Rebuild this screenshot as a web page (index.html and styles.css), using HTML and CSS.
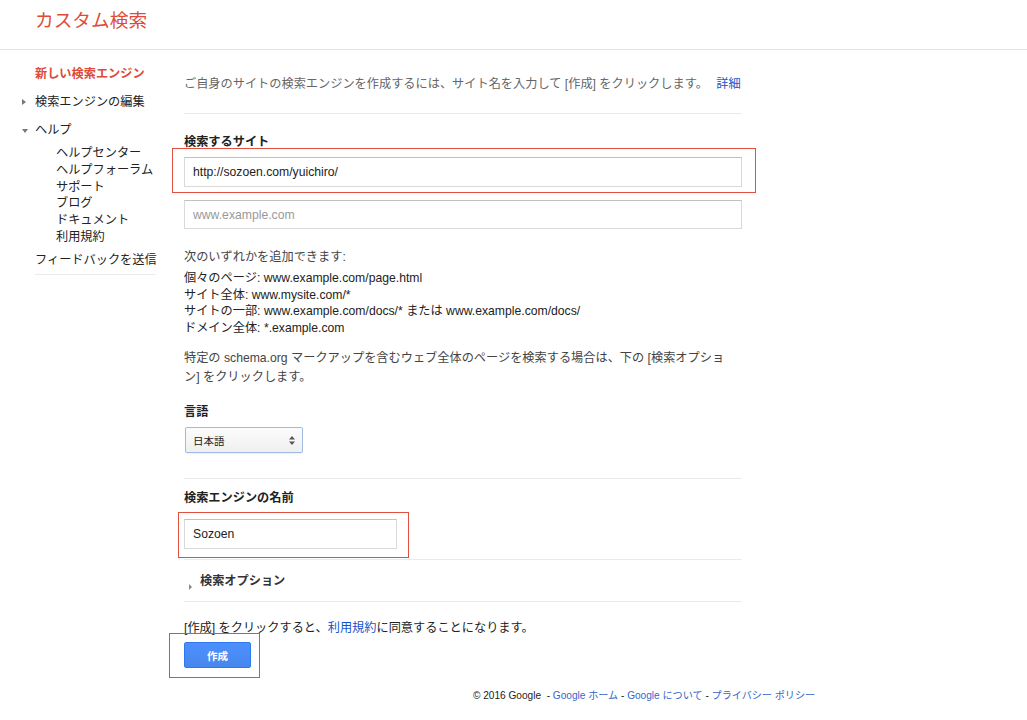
FILE: index.html
```html
<!DOCTYPE html>
<html lang="ja">
<head>
<meta charset="utf-8">
<title>カスタム検索</title>
<link rel="stylesheet" href="styles.css">
</head>
<body>
<header class="header">
  <div class="title">カスタム検索</div>
</header>
<div class="page">
  <nav class="sidebar">
    <div class="nav-item active">新しい検索エンジン</div>
    <div class="nav-item"><span class="tri-right"></span>検索エンジンの編集</div>
    <div class="nav-item"><span class="tri-down"></span>ヘルプ</div>
    <ul class="sub">
      <li>ヘルプセンター</li>
      <li>ヘルプフォーラム</li>
      <li>サポート</li>
      <li>ブログ</li>
      <li>ドキュメント</li>
      <li>利用規約</li>
    </ul>
    <div class="nav-item feedback">フィードバックを送信</div>
  </nav>
  <main class="main">
    <div class="intro">ご自身のサイトの検索エンジンを作成するには、サイト名を入力して [作成] をクリックします。 <a class="link more">詳細</a></div>
    <section class="section first">
      <div class="label">検索するサイト</div>
      <div class="hl hl-site"><input class="field" type="text" value="http://sozoen.com/yuichiro/"></div>
      <input class="field field2" type="text" placeholder="www.example.com">
      <div class="hint">次のいずれかを追加できます:</div>
      <div class="examples">
        <div>個々のページ: www.example.com/page.html</div>
        <div>サイト全体: www.mysite.com/*</div>
        <div>サイトの一部: www.example.com/docs/* または www.example.com/docs/</div>
        <div>ドメイン全体: *.example.com</div>
      </div>
      <p class="para">特定の schema.org マークアップを含むウェブ全体のページを検索する場合は、下の [検索オプション] をクリックします。</p>
      <div class="label lang-label">言語</div>
      <div class="select">
        <span>日本語</span>
        <svg width="8" height="11" viewBox="0 0 8 11"><path d="M4 1 L7 4.5 H1 Z M4 10 L7 6.5 H1 Z" fill="#555"/></svg>
      </div>
    </section>
    <section class="section name">
      <div class="label">検索エンジンの名前</div>
      <div class="hl hl-name"><input class="field name-field" type="text" value="Sozoen"></div>
    </section>
    <section class="section options">
      <span class="tri-small"></span><span class="opt-text">検索オプション</span>
    </section>
    <div class="terms">[作成] をクリックすると、<a class="link">利用規約</a>に同意することになります。</div>
    <div class="hl hl-btn"><button class="btn">作成</button></div>
  </main>
</div>
<footer class="footer">© 2016 Google &nbsp;- <a class="flink">Google ホーム</a> - <a class="flink">Google について</a> - <a class="flink">プライバシー ポリシー</a></footer>
</body>
</html>
```
FILE: styles.css
```css
* { box-sizing: border-box; }
body {
  margin: 0;
  font-family: "Liberation Sans", "Noto Sans CJK JP", sans-serif;
  font-size: 12.2px;
  color: #222;
  background: #fff;
}
.header {
  height: 50px;
  border-bottom: 1px solid #e5e5e5;
}
.title {
  padding: 9px 0 0 35px;
  font-size: 18.7px;
  line-height: 24px;
  color: #dd4b39;
}
.page {
  display: flex;
  align-items: flex-start;
}
.sidebar {
  width: 134px;
  margin-left: 22px;
  padding-top: 16px;
  white-space: nowrap;
}
.nav-item {
  position: relative;
  padding-left: 13px;
  line-height: 17px;
  margin-bottom: 11px;
  color: #222;
}
.nav-item.active {
  color: #dd4b39;
  font-weight: bold;
}
.tri-right {
  position: absolute;
  left: 0;
  top: 5px;
  border-left: 4px solid #777;
  border-top: 3.5px solid transparent;
  border-bottom: 3.5px solid transparent;
}
.tri-down {
  position: absolute;
  left: 0;
  top: 7px;
  border-top: 4px solid #777;
  border-left: 3.5px solid transparent;
  border-right: 3.5px solid transparent;
}
.sub {
  list-style: none;
  margin: -5px 0 0 0;
  padding: 0 0 0 34px;
  line-height: 16.8px;
}
.feedback {
  margin-top: 6px;
  margin-left: 13px;
  padding-left: 0;
  padding-bottom: 5px;
  border-bottom: 1px solid #ebebeb;
}
.main {
  width: 558px;
  margin-left: 28px;
}
.intro {
  margin-top: 26px;
  line-height: 17px;
  color: #666;
  padding-bottom: 20px;
  border-bottom: 1px solid #ebebeb;
  white-space: nowrap;
}
.more { margin-left: 5px; }
.link { color: #15c; text-decoration: none; }
.section { border-bottom: 1px solid #ebebeb; }
.first { padding-top: 20px; padding-bottom: 25px; }
.label {
  font-weight: bold;
  line-height: 17px;
  color: #222;
}
.hl { position: relative; }
.hl::after {
  content: "";
  position: absolute;
  border: 1.5px solid #e0503c;
  pointer-events: none;
}
.hl-site { margin-top: 6px; }
.hl-site::after { left: -12px; right: -14px; top: -9px; bottom: -6px; }
.field {
  display: block;
  width: 100%;
  height: 30px;
  border: 1px solid #d9d9d9;
  border-top-color: #c0c0c0;
  padding: 0 8px;
  font-family: "Liberation Sans", "Noto Sans CJK JP", sans-serif;
  font-size: 12.2px;
  color: #222;
  outline: none;
}
.field::placeholder { color: #999; }
.field2 { margin-top: 13px; height: 29px; }
.hint {
  margin-top: 20px;
  line-height: 17px;
  color: #444;
}
.examples {
  margin-top: 4px;
  line-height: 16.5px;
  color: #222;
}
.para {
  margin: 13px 0 0 0;
  line-height: 18.5px;
  color: #444;
  width: 550px;
}
.lang-label { margin-top: 18px; }
.select {
  margin-top: 6px;
  margin-left: 1px;
  width: 118px;
  height: 26px;
  border: 1px solid #9fbbe3;
  border-radius: 2px;
  background: linear-gradient(#fcfcfc, #efefef);
  display: flex;
  align-items: center;
  justify-content: space-between;
  padding: 0 6px 0 7px;
  font-size: 10.5px;
  color: #222;
  box-shadow: 0 1px 1px rgba(0,0,0,0.06);
}
.name { padding-top: 11px; padding-bottom: 10px; }
.hl-name { margin-top: 12px; width: 213px; }
.hl-name::after { left: -6px; right: -12px; top: -7px; bottom: -9px; }
.name-field { height: 30px; }
.options {
  position: relative;
  padding: 13px 0 11px 16px;
  line-height: 17px;
}
.tri-small {
  position: absolute;
  left: 5px;
  top: 24px;
  border-left: 3px solid #888;
  border-top: 3px solid transparent;
  border-bottom: 3px solid transparent;
}
.opt-text { font-weight: bold; color: #333; }
.terms {
  margin-top: 18px;
  line-height: 17px;
  color: #222;
}
.hl-btn { margin-top: 5px; width: 67px; }
.hl-btn::after { left: -15px; right: -9px; top: -9px; bottom: -10px; }
.btn {
  display: block;
  width: 67px;
  height: 26px;
  border: 1px solid #3079ed;
  border-radius: 2px;
  background: linear-gradient(#4d90fe, #4787ed);
  color: #fff;
  font-family: "Liberation Sans", "Noto Sans CJK JP", sans-serif;
  font-size: 10.5px;
  font-weight: bold;
  padding: 0;
}
.footer {
  margin: 20px 0 0 473px;
  font-size: 10.1px;
  line-height: 16px;
  color: #222;
  white-space: nowrap;
}
.flink { color: #36c; text-decoration: none; }
```
